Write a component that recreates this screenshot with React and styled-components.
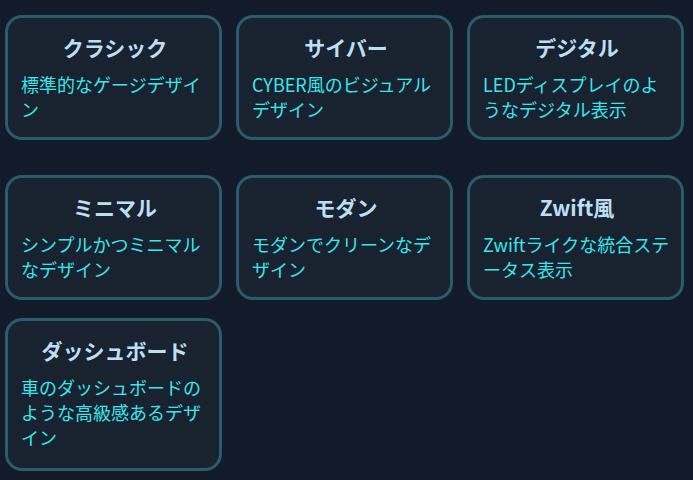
import styled, { createGlobalStyle } from "styled-components";

const GlobalStyle = createGlobalStyle`
  html, body {
    margin: 0;
    padding: 0;
    background: #131b2a;
  }
  body {
    font-family: "Noto Sans CJK JP", "Noto Sans", sans-serif;
  }
`;

const Page = styled.div`
  min-height: 480px;
  background: #131b2a;
  padding: 15px 0 0 5px;
  box-sizing: border-box;
`;

const Grid = styled.div`
  display: grid;
  grid-template-columns: repeat(3, 217px);
  column-gap: 14px;
  row-gap: 18px;
  align-items: start;
`;

const Card = styled.div`
  box-sizing: border-box;
  background: #19222f;
  border: 3px solid #2b5c6e;
  border-radius: 17px;
  padding: 16px 10px 13px 13px;
  margin-bottom: ${(props) => (props.$spaced ? "17px" : "0")};
  height: ${(props) => (props.$tall ? "153px" : "125px")};
`;

const Title = styled.h3`
  margin: 0 0 12px;
  text-align: center;
  font-size: 21px;
  line-height: 26px;
  font-weight: 700;
  color: #bcdff6;
`;

const Desc = styled.p`
  margin: 0;
  font-size: 18px;
  line-height: 25px;
  color: #3ae6ee;
  word-break: break-all;
  line-break: loose;
`;

const designs = [
  { title: "クラシック", desc: "標準的なゲージデザイン" },
  { title: "サイバー", desc: "CYBER風のビジュアルデザイン" },
  { title: "デジタル", desc: "LEDディスプレイのようなデジタル表示" },
  { title: "ミニマル", desc: "シンプルかつミニマルなデザイン" },
  { title: "モダン", desc: "モダンでクリーンなデザイン" },
  { title: "Zwift風", desc: "Zwiftライクな統合ステータス表示" },
  { title: "ダッシュボード", desc: "車のダッシュボードのような高級感あるデザイン" },
];

export default function App() {
  return (
    <>
      <GlobalStyle />
      <Page>
        <Grid>
          {designs.map((d, i) => (
            <Card key={d.title} $spaced={i < 3} $tall={i === 6}>
              <Title>{d.title}</Title>
              <Desc>{d.desc}</Desc>
            </Card>
          ))}
        </Grid>
      </Page>
    </>
  );
}
